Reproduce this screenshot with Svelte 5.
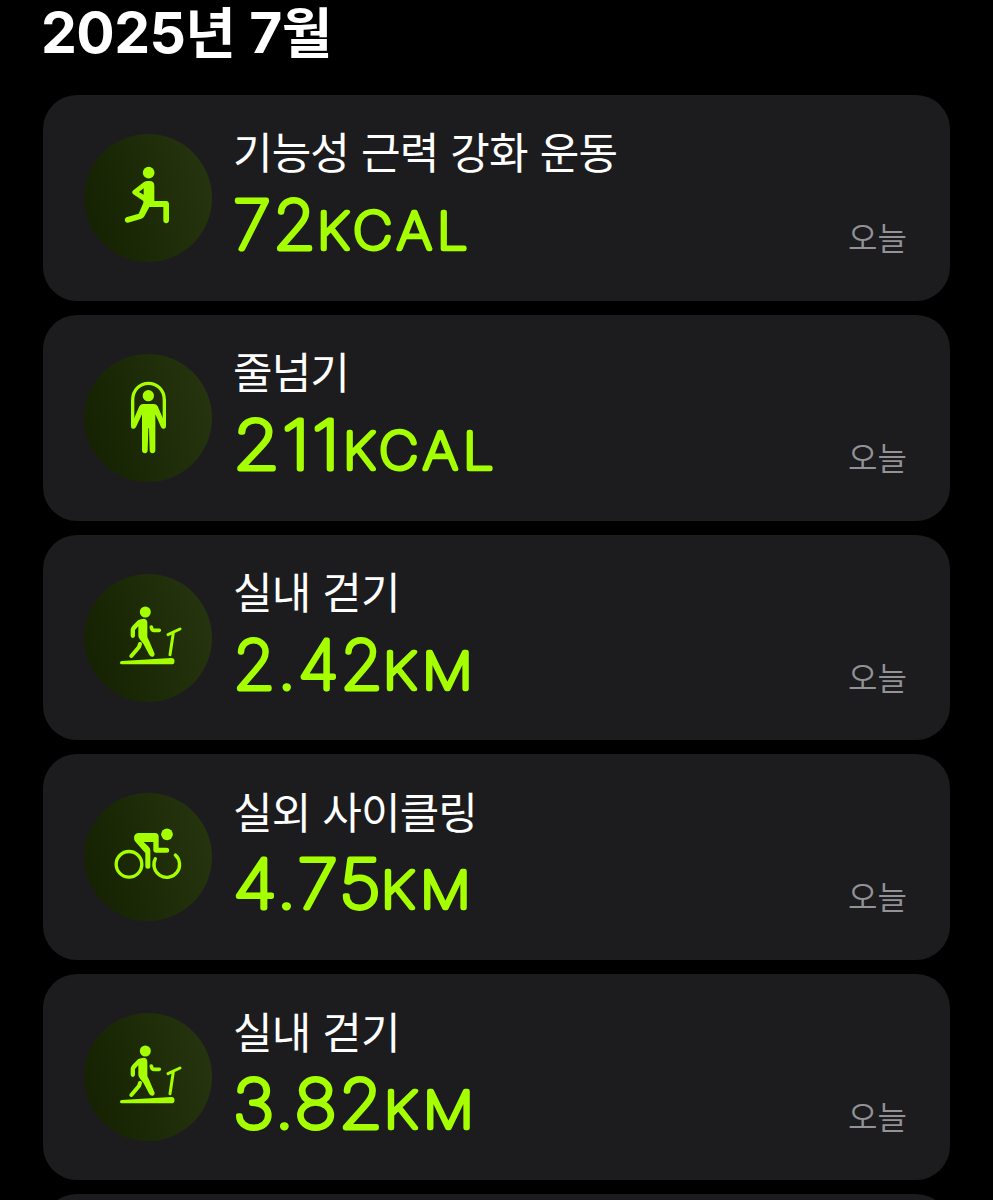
<script>
  const workouts = [
    { icon: "strength", name: "기능성 근력 강화 운동", value: "72", unit: "KCAL", valueWidth: 85, unitX: 84, unitWidth: 156 },
    { icon: "rope", name: "줄넘기", value: "211", unit: "KCAL", valueWidth: 109, unitX: 110, unitWidth: 156 },
    { icon: "treadmill", name: "실내 걷기", value: "2.42", unit: "KM", valueWidth: 152, unitX: 150, unitWidth: 95 },
    { icon: "cycling", name: "실외 사이클링", value: "4.75", unit: "KM", valueWidth: 150, unitX: 148, unitWidth: 95 },
    { icon: "treadmill", name: "실내 걷기", value: "3.82", unit: "KM", valueWidth: 152, unitX: 151, unitWidth: 95 },
  ];
</script>

<main class="page">
  <h1>2025<span>년</span> 7<span>월</span></h1>

  <ul class="list">
    {#each workouts as workout}
      <li class="card">
        <div class="badge">
          <svg class="icon" viewBox="12 27 384 384" aria-hidden="true">
            {#if workout.icon === "strength"}
              <circle class="fill" cx="206" cy="143" r="17.5" />
              <path
                class="fill"
                d="M189 173Q194 168 202 168H209Q223 168 223 183V228H259Q267 229 267 238V286A8.5 8.5 0 0 1 250 286V246H208L193 274Q190 279 184 281L144 293A8.5 8.5 0 0 1 139 277L176 266L190 234V228L160 208Q153 202 160 196ZM191 190L177 201L191 209Z"
                fill-rule="evenodd"
              />
            {:else if workout.icon === "rope"}
              <circle class="fill" cx="205" cy="152" r="17" />
              <path class="line" stroke-width="10" d="M158 240V166C158 98 253 98 253 166V240" />
              <path
                class="fill"
                d="M190 177H221Q229 177 233 184L257 239Q260 249 252 251Q246 253 243 246L226 208V316A8.5 8.5 0 0 1 209 316L207 250H205L203 316A8.5 8.5 0 0 1 186 316V208L168 246Q165 253 158 251Q151 249 154 239L178 184Q182 177 190 177Z"
              />
            {:else if workout.icon === "treadmill"}
              <circle class="fill" cx="196" cy="141" r="16.5" />
              <path
                class="fill"
                d="M174 166Q182 161 192 161Q202 162 202 174V214Q202 219 206 224L223 264Q226 271 219 275Q212 277 208 270L190 236Q175 220 175 213V184L165 195V213Q163 219 158 219Q152 218 152 212V193Q153 188 157 183Z"
              />
              <path class="line" stroke-width="12" d="M180 237L177 246L154 273" />
              <path class="line" stroke-width="11" d="M214 186Q215 195 221 196H238" />
              <path class="line" stroke-width="9" d="M264 209L300 192M280 203L270 269" />
              <path class="fill" d="M125 288L274 279A9 9 0 0 1 274 298H125A5 5 0 0 1 125 288Z" />
            {:else}
              <circle class="fill" cx="261" cy="151" r="17.5" />
              <circle class="line" stroke-width="10" cx="147" cy="241" r="38.5" />
              <path class="line" stroke-width="10" d="M226 224A38.5 38.5 0 1 0 286 213" />
              <path
                class="fill"
                d="M176 147H225Q236 147 236 158V191H260A7.5 7.5 0 0 1 260 206H229Q220 206 220 197V174H191L206 188Q211 193 211 199V247A7.5 7.5 0 0 1 196 247V207L167 174Q161 167 162 159Q165 147 176 147Z"
              />
            {/if}
          </svg>
        </div>

        <div class="details">
          <h2>{workout.name}</h2>
          <svg class="metric" viewBox="0 0 300 68" role="img" aria-label="{workout.value}{workout.unit}">
            <text class="value" x="0" y="57" textLength={workout.valueWidth} lengthAdjust="spacingAndGlyphs">{workout.value}</text>
            <text class="unit" x={workout.unitX} y="57" textLength={workout.unitWidth} lengthAdjust="spacingAndGlyphs">{workout.unit}</text>
          </svg>
        </div>

        <span class="date">오늘</span>
      </li>
    {/each}
    <li class="card"></li>
  </ul>
</main>

<style>
  :global(body) {
    margin: 0;
    background: #000;
  }

  .page {
    box-sizing: border-box;
    height: 1200px;
    padding: 0 43px;
    overflow: hidden;
    background: #000;
    color: #fff;
    font-family: Inter, "Noto Sans CJK KR", sans-serif;
  }

  h1 {
    height: 66px;
    margin: 0 0 28.8px -2px;
    font-size: 57px;
    font-weight: 700;
    letter-spacing: -0.6px;
    line-height: 66px;
    white-space: nowrap;
    word-spacing: 1px;
  }

  h1 span {
    font-size: 55px;
    line-height: 1;
  }

  .list {
    display: flex;
    flex-direction: column;
    gap: 14px;
    margin: 0;
    padding: 0;
    list-style: none;
  }

  .card {
    box-sizing: border-box;
    display: flex;
    flex: none;
    width: 907px;
    height: 205.9px;
    padding: 39px 43px 0 41px;
    border-radius: 34px;
    background: #1c1c1e;
  }

  .badge {
    flex: none;
    width: 128px;
    height: 128px;
    border-radius: 50%;
    background: linear-gradient(75deg, #142000, #273610);
  }

  .icon {
    display: block;
    width: 128px;
    height: 128px;
  }

  .fill {
    fill: #a6ff00;
  }

  .line {
    fill: none;
    stroke: #a6ff00;
    stroke-linecap: round;
    stroke-linejoin: round;
  }

  .details {
    flex: 1;
    padding-left: 21px;
  }

  h2 {
    height: 40px;
    margin: -3.5px 0 0;
    font-family: "Noto Sans CJK KR", sans-serif;
    font-size: 43px;
    font-weight: 400;
    letter-spacing: -0.9px;
    line-height: 40px;
    white-space: nowrap;
    word-spacing: 3.3px;
  }

  .metric {
    display: block;
    width: 300px;
    height: 68px;
    margin-top: 21.5px;
    overflow: visible;
  }

  /* A thin face with a round-joined outline gives the digits soft ends */
  .metric text {
    fill: #a6ff00;
    stroke: #a6ff00;
    stroke-linejoin: round;
    font-weight: 100;
  }

  .value {
    font-size: 67px;
    letter-spacing: 2px;
    stroke-width: 4.8px;
  }

  .unit {
    font-size: 51px;
    letter-spacing: 5px;
    stroke-width: 4.6px;
  }

  .date {
    align-self: flex-start;
    margin-top: 82px;
    color: #929297;
    font-family: "Noto Sans CJK KR", sans-serif;
    font-size: 32px;
    font-weight: 350;
    line-height: 40px;
  }
</style>
